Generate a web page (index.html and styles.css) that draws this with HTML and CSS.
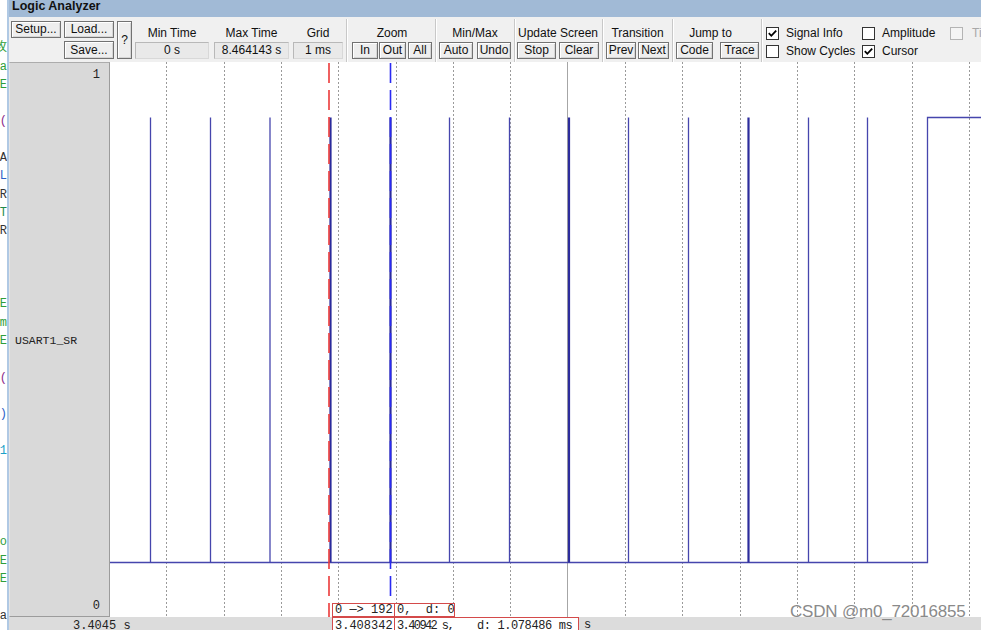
FILE: index.html
```html
<!DOCTYPE html>
<html>
<head>
<meta charset="utf-8">
<title>Logic Analyzer</title>
<link rel="stylesheet" href="styles.css">
</head>
<body>
<div class="app">
  <div class="codestrip">
    <div class="codeline">&nbsp;</div>
    <div class="codeline c-green">攻</div>
    <div class="codeline c-green">a</div>
    <div class="codeline c-green">E</div>
    <div class="codeline">&nbsp;</div>
    <div class="codeline c-purple">(</div>
    <div class="codeline">&nbsp;</div>
    <div class="codeline c-dark">A</div>
    <div class="codeline c-blue">L</div>
    <div class="codeline c-dark">R</div>
    <div class="codeline c-teal">T</div>
    <div class="codeline c-dark">R</div>
    <div class="codeline">&nbsp;</div>
    <div class="codeline">&nbsp;</div>
    <div class="codeline">&nbsp;</div>
    <div class="codeline c-green">E</div>
    <div class="codeline c-green">m</div>
    <div class="codeline c-green">E</div>
    <div class="codeline">&nbsp;</div>
    <div class="codeline c-purple">(</div>
    <div class="codeline">&nbsp;</div>
    <div class="codeline c-blue">)</div>
    <div class="codeline">&nbsp;</div>
    <div class="codeline c-cyan">1</div>
    <div class="codeline">&nbsp;</div>
    <div class="codeline">&nbsp;</div>
    <div class="codeline">&nbsp;</div>
    <div class="codeline">&nbsp;</div>
    <div class="codeline c-green">o</div>
    <div class="codeline c-green">E</div>
    <div class="codeline c-green">E</div>
    <div class="codeline">&nbsp;</div>
    <div class="codeline c-dark">a</div>
  </div>
  <div class="divider"></div>
  <div class="main">
    <div class="titlebar">Logic Analyzer</div>
    <div class="toolbar">
      <div class="filegrp">
        <div class="btn b-setup">Setup...</div>
        <div class="btn b-load">Load...</div>
        <div class="btn b-save">Save...</div>
        <div class="btn b-help">?</div>
      </div>
      <div class="field f-min"><div class="glabel">Min Time</div><div class="valbox">0 s</div></div>
      <div class="field f-max"><div class="glabel">Max Time</div><div class="valbox">8.464143 s</div></div>
      <div class="field f-grid"><div class="glabel">Grid</div><div class="valbox">1 ms</div></div>
      <div class="sep s1"></div>
      <div class="field g-zoom">
        <div class="glabel">Zoom</div>
        <div class="brow"><div class="btn w-in">In</div><div class="btn w-out">Out</div><div class="btn w-all">All</div></div>
      </div>
      <div class="sep s2"></div>
      <div class="field g-mm">
        <div class="glabel">Min/Max</div>
        <div class="brow"><div class="btn w-auto">Auto</div><div class="btn w-undo">Undo</div></div>
      </div>
      <div class="sep s3"></div>
      <div class="field g-upd">
        <div class="glabel">Update Screen</div>
        <div class="brow"><div class="btn w-stop">Stop</div><div class="btn w-clear">Clear</div></div>
      </div>
      <div class="sep s4"></div>
      <div class="field g-tr">
        <div class="glabel">Transition</div>
        <div class="brow"><div class="btn w-prev">Prev</div><div class="btn w-next">Next</div></div>
      </div>
      <div class="sep s5"></div>
      <div class="field g-jump">
        <div class="glabel jump-label">Jump to</div>
        <div class="brow"><div class="btn w-code">Code</div><div class="btn w-trace">Trace</div></div>
      </div>
      <div class="sep s6"></div>
      <div class="checks">
        <div class="chk"><span class="box"><svg width="11" height="11" viewBox="0 0 11 11"><path d="M1.8 5.2 L4.3 7.8 L9.2 2.6" fill="none" stroke="#000" stroke-width="1.8"/></svg></span>Signal Info</div>
        <div class="chk"><span class="box"></span>Amplitude</div>
        <div class="chk disabled"><span class="box"></span>Timing Info</div>
        <div class="chk"><span class="box"></span>Show Cycles</div>
        <div class="chk"><span class="box"><svg width="11" height="11" viewBox="0 0 11 11"><path d="M1.8 5.2 L4.3 7.8 L9.2 2.6" fill="none" stroke="#000" stroke-width="1.8"/></svg></span>Cursor</div>
        <div class="chk"></div>
      </div>
    </div>
    <div class="content">
      <div class="names">
        <div class="nm-top">1</div>
        <div class="nm-sig">USART1_SR</div>
        <div class="nm-bot">0</div>
      </div>
      <div class="wave">
        <svg class="wavesvg" width="871" height="555" viewBox="0 0 871 555">
          <g stroke="#9a9a9a" stroke-width="1" stroke-dasharray="2 2">
            <line x1="56.5" y1="0" x2="56.5" y2="555"/>
            <line x1="114.5" y1="0" x2="114.5" y2="555"/>
            <line x1="171.5" y1="0" x2="171.5" y2="555"/>
            <line x1="228.5" y1="0" x2="228.5" y2="555"/>
            <line x1="286.5" y1="0" x2="286.5" y2="555"/>
            <line x1="343.5" y1="0" x2="343.5" y2="555"/>
            <line x1="400.5" y1="0" x2="400.5" y2="555"/>
            <line x1="515.5" y1="0" x2="515.5" y2="555"/>
            <line x1="572.5" y1="0" x2="572.5" y2="555"/>
            <line x1="630.5" y1="0" x2="630.5" y2="555"/>
            <line x1="687.5" y1="0" x2="687.5" y2="555"/>
            <line x1="744.5" y1="0" x2="744.5" y2="555"/>
            <line x1="802.5" y1="0" x2="802.5" y2="555"/>
            <line x1="859.5" y1="0" x2="859.5" y2="555"/>
          </g>
          <line x1="457.5" y1="0" x2="457.5" y2="555" stroke="#a6a6a6" stroke-width="1"/>
          <path d="M0 500.5 H817.5 V55.5 H871" fill="none" stroke="#4646ad" stroke-width="1.3"/>
          <g stroke="#4646ad" stroke-width="1.3">
            <line x1="40.5" y1="55.5" x2="40.5" y2="500.5"/>
            <line x1="100.5" y1="55.5" x2="100.5" y2="500.5"/>
            <line x1="160" y1="55.5" x2="160" y2="500.5"/>
            <line x1="339.5" y1="55.5" x2="339.5" y2="500.5"/>
            <line x1="399.5" y1="55.5" x2="399.5" y2="500.5"/>
            <line x1="518.5" y1="55.5" x2="518.5" y2="500.5"/>
            <line x1="578.5" y1="55.5" x2="578.5" y2="500.5"/>
            <line x1="698.5" y1="55.5" x2="698.5" y2="500.5"/>
            <line x1="757.5" y1="55.5" x2="757.5" y2="500.5"/>
          </g>
          <g stroke="#2c2c9c" stroke-width="2.2">
            <line x1="220.5" y1="55.5" x2="220.5" y2="500.5"/>
            <line x1="280.5" y1="55.5" x2="280.5" y2="500.5"/>
            <line x1="459" y1="55.5" x2="459" y2="500.5"/>
            <line x1="638.5" y1="55.5" x2="638.5" y2="500.5"/>
          </g>
          <line x1="219" y1="1" x2="219" y2="555" stroke="#ec3a3a" stroke-width="1.6" stroke-dasharray="20 7"/>
          <line x1="280.5" y1="1" x2="280.5" y2="555" stroke="#2a2af2" stroke-width="1.6" stroke-dasharray="20 7"/>
        </svg>
        <div class="cursorinfo">
          <div class="cbox cb-a">0 —&gt; 192</div>
          <div class="cbox cb-b">0,&nbsp;&nbsp;d: 0</div>
        </div>
      </div>
    </div>
    <div class="status">
      <div class="st-time">3.4045 s</div>
      <div class="cbox sb-a">3.408342</div>
      <div class="cbox sb-b"><span class="t1">3.40942 s,</span><span class="t2">d: 1.078486 ms</span></div>
      <div class="st-s">s</div>
    </div>
  </div>
  <div class="watermark">CSDN @m0_72016855</div>
</div>
</body>
</html>
```

FILE: styles.css
```css
* { box-sizing: border-box; }
html, body { margin: 0; padding: 0; }
body {
  width: 981px;
  height: 630px;
  overflow: hidden;
  background: #ffffff;
  font-family: "Liberation Sans", Arial, sans-serif;
  font-size: 12px;
  color: #111;
}
.app {
  position: relative;
  display: flex;
  width: 981px;
  height: 630px;
  overflow: hidden;
}

/* left code editor remnant */
.codestrip {
  width: 7px;
  flex: none;
  background: #fff;
  padding-top: 21px;
  display: flex;
  flex-direction: column;
  font-family: "Liberation Mono", "Noto Sans CJK SC", monospace;
  font-size: 12px;
  line-height: 18.3px;
  overflow: hidden;
}
.codeline {
  height: 18.3px;
  flex: none;
  display: flex;
  justify-content: flex-end;
  white-space: nowrap;
  overflow: hidden;
}
.c-green { color: #2e9e3a; }
.c-purple { color: #8b2a8b; }
.c-dark { color: #333; }
.c-blue { color: #2b5fc8; }
.c-teal { color: #1f8a4c; }
.c-cyan { color: #1aa0c8; }

.divider {
  width: 2px;
  flex: none;
  background: #b0c9e4;
}

.main {
  flex: 1;
  min-width: 0;
  display: flex;
  flex-direction: column;
}

.titlebar {
  height: 17px;
  flex: none;
  background: #a1bad6;
  font-weight: bold;
  font-size: 12.5px;
  line-height: 13px;
  padding-left: 3px;
  color: #111;
  white-space: nowrap;
}

/* toolbar */
.toolbar {
  height: 45px;
  flex: none;
  background: #f0f0f0;
  display: flex;
  align-items: flex-start;
  padding-left: 2px;
  white-space: nowrap;
}
.btn {
  height: 17px;
  border: 1px solid #727272;
  background: #eeeeee;
  box-shadow: inset 1px 1px 0 #ffffff, inset -1px -1px 0 #d6d6d6;
  line-height: 15px;
  text-align: center;
  white-space: nowrap;
  color: #111;
}
.filegrp {
  width: 121px;
  flex: none;
  margin-top: 4px;
  display: grid;
  grid-template-columns: 50px 50px 15px;
  grid-template-rows: 17px 18px;
  column-gap: 3px;
  row-gap: 3px;
}
.b-setup { grid-column: 1; grid-row: 1; }
.b-load { grid-column: 2; grid-row: 1; }
.b-save { grid-column: 2; grid-row: 2; height: 18px; line-height: 16px; }
.b-help {
  grid-column: 3;
  grid-row: 1 / 3;
  height: 38px;
  display: flex;
  align-items: center;
  justify-content: center;
}

.field {
  flex: none;
  display: flex;
  flex-direction: column;
  margin-top: 9px;
}
.glabel {
  height: 14px;
  line-height: 14px;
  text-align: center;
  white-space: nowrap;
}
.jump-label { padding-right: 14px; }
.valbox {
  margin-top: 2px;
  height: 17px;
  line-height: 15px;
  text-align: center;
  background: #e9e9e9;
  border: 1px solid #b8b8b8;
  border-bottom-color: #d8d8d8;
  border-right-color: #d8d8d8;
}
.brow {
  margin-top: 2px;
  display: flex;
}

.f-min { margin-left: 3px; width: 74px; }
.f-max { margin-left: 5px; width: 75px; }
.f-grid { margin-left: 4px; width: 50px; }

.sep {
  flex: none;
  width: 2px;
  height: 43px;
  margin-top: 2px;
  border-left: 1px solid #c8c8c8;
  border-right: 1px solid #ffffff;
}
.s1 { margin-left: 3px; }
.s2 { margin-left: 3px; }
.s3 { margin-left: 3px; }
.s4 { margin-left: 3px; }
.s5 { margin-left: 3px; }
.s6 { margin-left: 2px; }

.g-zoom { margin-left: 4px; width: 80px; }
.g-mm { margin-left: 2px; width: 72px; }
.g-upd { margin-left: 1px; width: 82px; }
.g-tr { margin-left: 2px; width: 63px; }
.g-jump { margin-left: 2px; width: 83px; }

.w-in { width: 26px; }
.w-out { width: 27px; margin-left: 1px; }
.w-all { width: 24px; margin-left: 2px; }
.w-auto { width: 34px; }
.w-undo { width: 34px; margin-left: 4px; }
.w-stop { width: 39px; }
.w-clear { width: 40px; margin-left: 3px; }
.w-prev { width: 30px; }
.w-next { width: 31px; margin-left: 2px; }
.w-code { width: 37px; }
.w-trace { width: 39px; margin-left: 7px; }

.checks {
  flex: none;
  margin-left: 3px;
  margin-top: 10px;
  display: grid;
  grid-template-columns: 96px 88px 60px;
  grid-template-rows: 13px 13px;
  row-gap: 5px;
}
.chk {
  display: flex;
  align-items: center;
  height: 13px;
  line-height: 13px;
  white-space: nowrap;
  overflow: hidden;
}
.box {
  width: 13px;
  height: 13px;
  flex: none;
  margin-right: 7px;
  border: 1px solid #333;
  background: #fff;
  display: flex;
  align-items: center;
  justify-content: center;
}
.box svg { display: block; }
.chk.disabled { color: #a8a8a8; }
.chk.disabled .box {
  border-color: #b4b4b4;
  background: #f4f4f4;
  margin-right: 9px;
}

/* content */
.content {
  height: 555px;
  flex: none;
  display: flex;
}
.names {
  width: 101px;
  flex: none;
  background: #d9d9d9;
  border-top: 1px solid #acacac;
  border-right: 1px solid #9c9c9c;
  border-bottom: 1px solid #9c9c9c;
  border-left: 1px solid #e6e6e6;
  padding: 5px 9px 3px 5px;
  display: flex;
  flex-direction: column;
  justify-content: space-between;
  font-family: "Liberation Mono", monospace;
  font-size: 12px;
  line-height: 14px;
  color: #222;
}
.nm-top, .nm-bot { text-align: right; }
.nm-sig { font-size: 11.5px; }

.wave {
  flex: 1;
  position: relative;
  background: #fff;
  overflow: hidden;
}
.wavesvg { display: block; }

.cbox {
  border: 1px solid #d44a4a;
  background: #fff;
  white-space: nowrap;
  overflow: hidden;
  font-family: "Liberation Mono", monospace;
  font-size: 12px;
  color: #222;
}
.cursorinfo {
  position: absolute;
  left: 222px;
  top: 541px;
  display: flex;
}
.cursorinfo .cbox {
  height: 14px;
  line-height: 12px;
  padding-left: 2px;
}
.cb-a { width: 63px; }
.cb-b { width: 61px; margin-left: -1px; padding-left: 1px; }

/* status bar */
.status {
  height: 13px;
  flex: none;
  background: #dcdcdc;
  display: flex;
  align-items: flex-start;
  overflow: hidden;
  font-family: "Liberation Mono", monospace;
  font-size: 12px;
  line-height: 14px;
  color: #222;
}
.st-time {
  margin-left: 64px;
  width: 259px;
  flex: none;
  padding-top: 2px;
  white-space: nowrap;
}
.status .cbox {
  height: 16px;
  line-height: 14px;
  padding-left: 2px;
  padding-top: 1px;
  flex: none;
}
.sb-a { width: 63px; }
.sb-b { width: 185px; margin-left: -1px; display: flex; }
.sb-b .t1 { letter-spacing: -1.6px; }
.sb-b .t2 { margin-left: 24px; letter-spacing: -0.4px; }
.st-s {
  margin-left: 5px;
  padding-top: 1px;
  flex: none;
}

.watermark {
  position: absolute;
  left: 790px;
  top: 603px;
  font-family: "Liberation Sans", Arial, sans-serif;
  font-size: 17px;
  line-height: 17px;
  letter-spacing: -0.2px;
  color: #8a8a8a;
  text-shadow: 0 0 1px #fff;
  white-space: nowrap;
}
```
